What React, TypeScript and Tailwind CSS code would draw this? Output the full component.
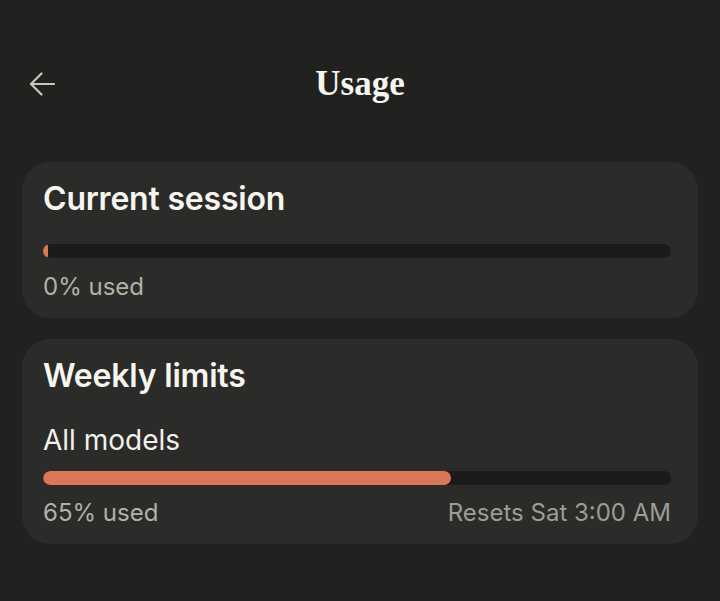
import React from 'react';

interface UsageBarProps {
  percent: number;
}

const UsageBar: React.FC<UsageBarProps> = ({ percent }) => (
  <div className="h-[14px] w-full rounded-full bg-[#1b1b1a] overflow-hidden">
    <div
      className="h-full rounded-full bg-[#d97757]"
      style={{ width: percent > 0 ? `${percent}%` : '5px' }}
    />
  </div>
);

const BackArrow: React.FC = () => (
  <svg width="26" height="24" viewBox="0 0 26 24" fill="none" stroke="#c8c6bb" strokeWidth="2.2" strokeLinecap="round" strokeLinejoin="round">
    <path d="M2 12h23" />
    <path d="M12.5 1.5 2 12l10.5 10.5" />
  </svg>
);

const Card: React.FC<{ children: React.ReactNode }> = ({ children }) => (
  <div className="rounded-[28px] bg-[#2b2b2a] pl-[21px] pr-[27px] pt-[17px] pb-[15px]">{children}</div>
);

const App: React.FC = () => (
  <div className="min-h-screen w-full bg-[#212120] font-['Inter',sans-serif]">
    <div className="pt-[60px] grid grid-cols-[1fr_auto_1fr] items-center h-[108px] px-[29px]">
      <div className="flex items-center">
        <BackArrow />
      </div>
      <h1 className="font-['Liberation_Serif',serif] font-bold text-[35px] leading-[48px] text-[#f7f5ef]">Usage</h1>
      <div />
    </div>

    <div className="mt-[54px] px-[22px] flex flex-col gap-[21px]">
      <Card>
        <h2 className="text-[32px] leading-[40px] font-semibold text-[#f7f5ef] tracking-[-0.2px]">Current session</h2>
        <div className="mt-[25px]">
          <UsageBar percent={0} />
        </div>
        <p className="mt-[13px] text-[24px] leading-[32px] text-[#b3b1a6]">0% used</p>
      </Card>

      <Card>
        <h2 className="text-[32px] leading-[40px] font-semibold text-[#f7f5ef] tracking-[-0.2px]">Weekly limits</h2>
        <p className="mt-[26px] text-[28px] leading-[36px] text-[#f2f0ea]">All models</p>
        <div className="mt-[13px]">
          <UsageBar percent={65} />
        </div>
        <div className="mt-[12px] flex items-center justify-between text-[24px] leading-[32px] text-[#b3b1a6]">
          <span>65% used</span>
          <span className="text-[#9e9c93]">Resets Sat 3:00 AM</span>
        </div>
      </Card>
    </div>
  </div>
);

export default App;
